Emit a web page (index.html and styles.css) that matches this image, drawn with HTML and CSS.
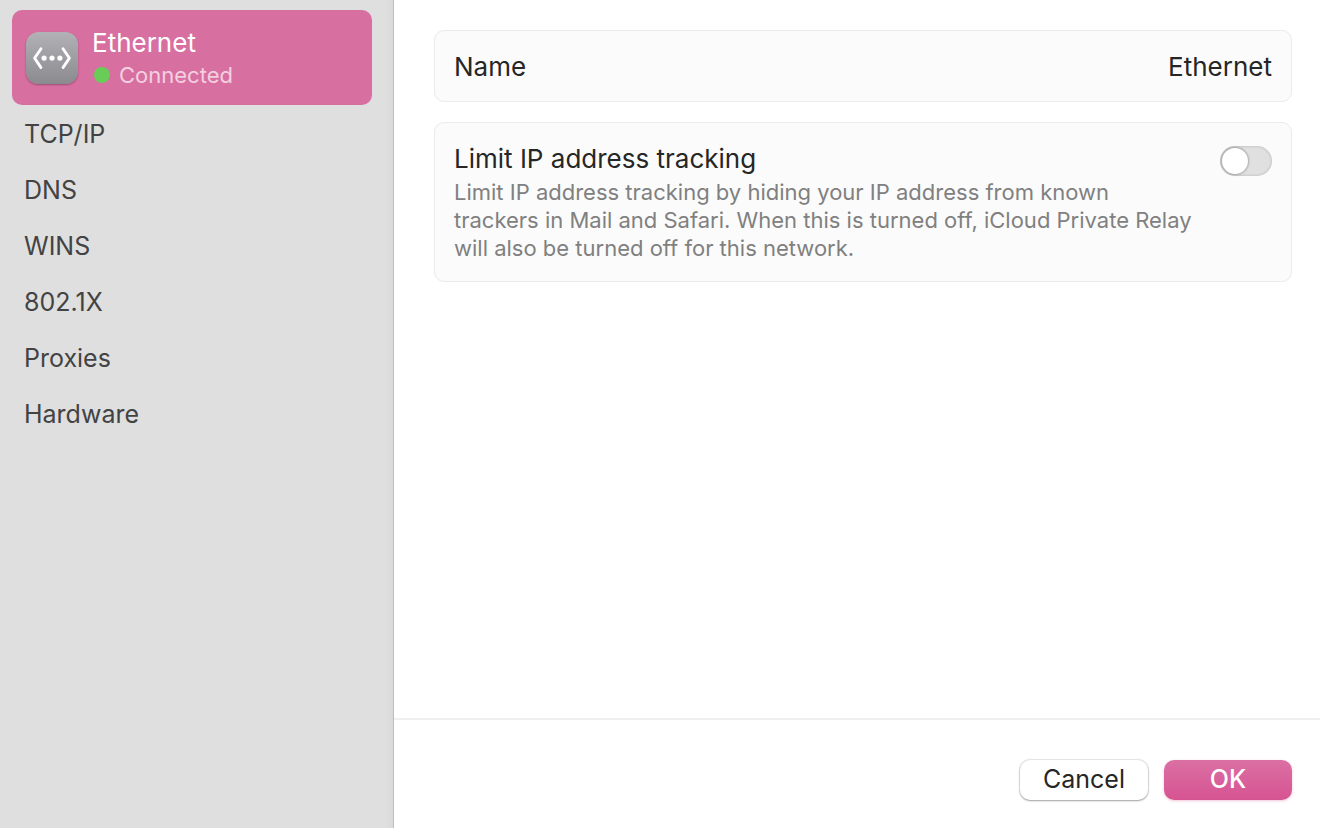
FILE: index.html
```html
<!DOCTYPE html>
<html lang="en">
<head>
<meta charset="utf-8">
<meta name="viewport" content="width=device-width, initial-scale=1">
<title>Ethernet</title>
<link rel="stylesheet" href="styles.css">
</head>
<body>
<div class="window">
  <nav class="sidebar" aria-label="Network settings">
    <a class="service" href="#ethernet" aria-current="page">
      <svg class="service-icon" viewBox="0 0 52 52" aria-hidden="true">
        <defs>
          <linearGradient id="tile" x1="0" y1="0" x2="0" y2="1">
            <stop offset="0" stop-color="#b1b1b6"/>
            <stop offset="1" stop-color="#8a8a8f"/>
          </linearGradient>
        </defs>
        <rect width="52" height="52" rx="12" fill="url(#tile)"/>
        <g fill="none" stroke="#fff" stroke-width="2.8" stroke-linecap="round" stroke-linejoin="round">
          <path d="M15 16.7 8.6 26.1l6.4 9.5"/>
          <path d="M37 16.7l6.4 9.4-6.4 9.5"/>
        </g>
        <g fill="#fff">
          <circle cx="18.1" cy="26.1" r="2.6"/>
          <circle cx="26" cy="26.1" r="2.6"/>
          <circle cx="33.9" cy="26.1" r="2.6"/>
        </g>
      </svg>
      <span class="service-text">
        <span class="service-name">Ethernet</span>
        <span class="service-status"><span class="dot"></span>Connected</span>
      </span>
    </a>
    <a class="item" href="#tcpip">TCP/IP</a>
    <a class="item" href="#dns">DNS</a>
    <a class="item" href="#wins">WINS</a>
    <a class="item" href="#8021x">802.1X</a>
    <a class="item" href="#proxies">Proxies</a>
    <a class="item" href="#hardware">Hardware</a>
  </nav>
  <div class="detail">
    <main class="content">
      <section class="card name-card">
        <span>Name</span>
        <span>Ethernet</span>
      </section>
      <section class="card limit-card">
        <div class="limit-text">
          <label class="limit-title" for="limit">Limit IP address tracking</label>
          <p class="limit-note" id="limit-note">Limit IP address tracking by hiding your IP address from known trackers in Mail and Safari. When this is turned off, iCloud Private Relay will also be turned off for this network.</p>
        </div>
        <input class="switch" type="checkbox" role="switch" id="limit" aria-describedby="limit-note">
      </section>
    </main>
    <footer class="footer">
      <button class="button" type="button">Cancel</button>
      <button class="button primary" type="button">OK</button>
    </footer>
  </div>
</div>
</body>
</html>
```
FILE: styles.css
```css
* {
  box-sizing: border-box;
}

body {
  margin: 0;
  background: #fff;
  color: #262626;
  font-family: Inter, "Liberation Sans", sans-serif;
  font-size: 25px;
  line-height: 32px;
}

.window {
  display: flex;
  min-height: 100vh;
}

.sidebar {
  flex: 0 0 394px;
  padding: 10px 21px 10px 12px;
  background: linear-gradient(to right, #dfdfdf calc(100% - 8px), #d9d9d9);
  border-right: 1px solid #bdbdbd;
}

.service {
  display: flex;
  align-items: center;
  gap: 14px;
  height: 95px;
  padding: 0 14px;
  border-radius: 10px;
  background: #d86fa1;
  color: #fff;
  text-decoration: none;
}

.service-icon {
  width: 52px;
  height: 52px;
  border-radius: 12px;
  box-shadow: 0 1px 2px rgba(0, 0, 0, 0.3);
}

.service-text {
  display: block;
  padding-top: 2px;
}

.service-name {
  display: block;
  font-size: 26px;
}

.service-status {
  display: flex;
  align-items: center;
  gap: 9px;
  color: #f3d0e0;
  font-size: 22px;
}

.dot {
  width: 16px;
  height: 16px;
  margin-left: 2px;
  border-radius: 50%;
  background: #68cc56;
}

.item {
  display: block;
  padding: 13px 12px 11px;
  color: #434343;
  text-decoration: none;
}

.detail {
  display: flex;
  flex: 1;
  flex-direction: column;
  min-width: 0;
}

.content {
  display: flex;
  flex: 1;
  flex-direction: column;
  gap: 20px;
  padding: 30px 28px 30px 40px;
}

.card {
  display: flex;
  justify-content: space-between;
  padding: 20px 19px 18px;
  border: 1px solid #ebebeb;
  border-radius: 10px;
  background: #fbfbfb;
  font-size: 26px;
}

.limit-card {
  align-items: flex-start;
  gap: 16px;
  padding-bottom: 19px;
}

.limit-text {
  max-width: 744px;
}

.limit-title {
  display: block;
}

.limit-note {
  margin: 3px 0 0;
  color: #808080;
  font-size: 22px;
  line-height: 28px;
}

.switch {
  appearance: none;
  flex: none;
  display: flex;
  align-items: center;
  width: 52px;
  height: 30px;
  margin: 3px 0 0;
  padding: 0 2px;
  border-radius: 15px;
  background: #e0e0e0;
  box-shadow: inset 0 0 3px rgba(0, 0, 0, 0.22);
}

.switch::before {
  content: "";
  width: 26px;
  height: 26px;
  border-radius: 50%;
  background: #fff;
  box-shadow: 0 0 2px 1px rgba(0, 0, 0, 0.25);
}

.switch:checked {
  justify-content: flex-end;
  background: #d65391;
}

.footer {
  display: flex;
  justify-content: flex-end;
  gap: 16px;
  padding: 40px 28px 28px;
  border-top: 2px solid #f0f0f0;
}

.button {
  width: 128px;
  height: 40px;
  padding: 0 0 2px;
  border: 0;
  border-radius: 10px;
  background: #fff;
  box-shadow: 0 0 1px 1px rgba(0, 0, 0, 0.1), 0 1px 2px rgba(0, 0, 0, 0.3);
  color: #262626;
  font: inherit;
}

.primary {
  background: linear-gradient(#db70a5, #d65391);
  box-shadow: 0 1px 3px rgba(214, 83, 145, 0.35);
  color: #fff;
  font-weight: 500;
}
```
